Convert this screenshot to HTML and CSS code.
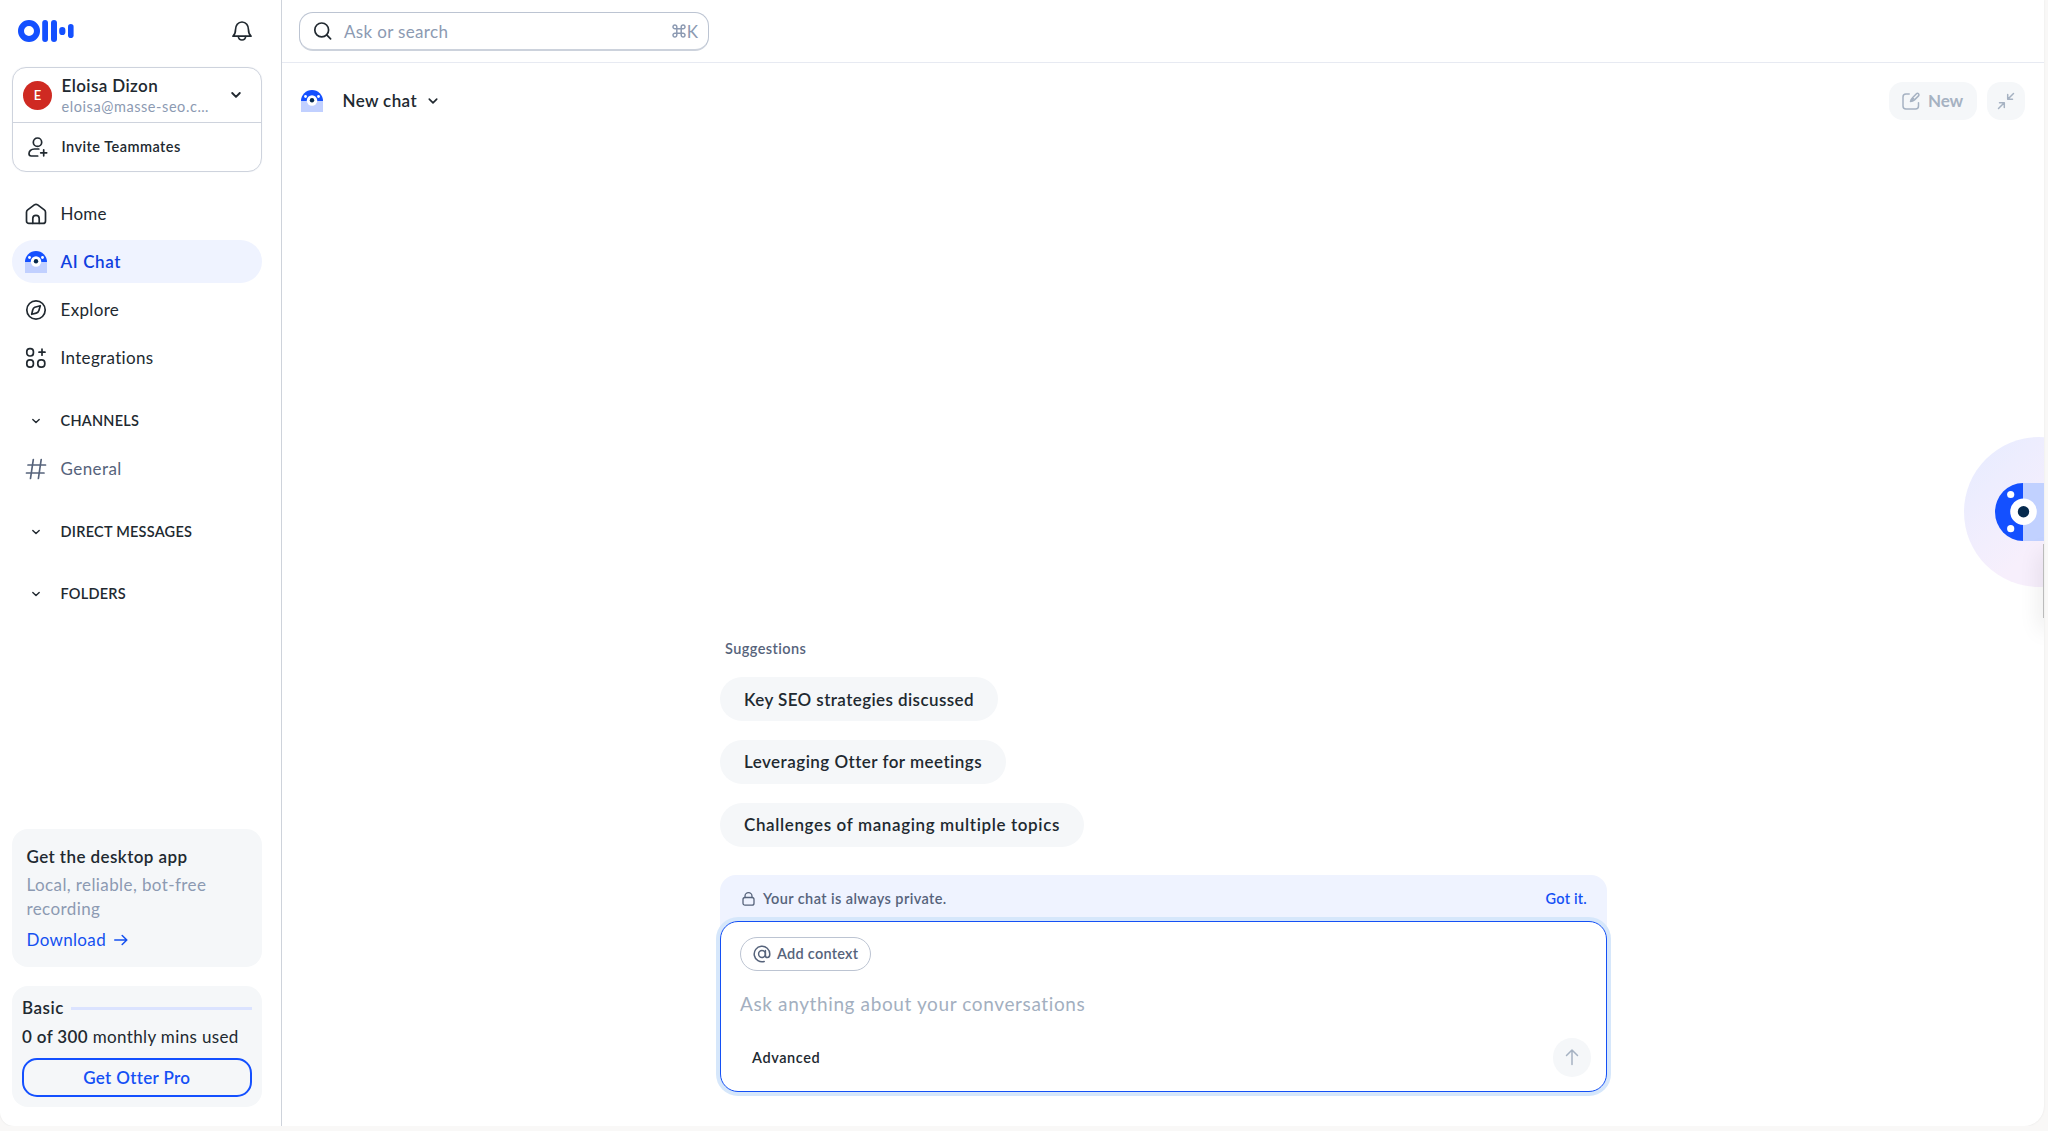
FILE: index.html
```html
<!DOCTYPE html>
<html lang="en">
<head>
<meta charset="utf-8">
<title>New chat</title>
<link rel="stylesheet" href="styles.css">
</head>
<body>
<svg width="0" height="0" class="defs">
  <symbol id="otter" viewBox="0 0 22 22">
    <path d="M0 11a11 11 0 0 1 22 0z" fill="#1450ff"/>
    <path d="M0 11h22v11H0z" fill="#c1d0ff"/>
    <circle cx="4.5" cy="6.5" r="1.4" fill="#fff"/><circle cx="17.5" cy="6.5" r="1.4" fill="#fff"/>
    <circle cx="11" cy="10.5" r="5.2" fill="#fff"/><circle cx="11" cy="10.2" r="2.2" fill="#062a4d"/>
  </symbol>
  <symbol id="chevron" viewBox="0 0 12 12">
    <path d="M2.8 4.4 6 7.600l3.200-3.200" fill="none" stroke="currentColor" stroke-width="1.4" stroke-linecap="round" stroke-linejoin="round"/>
  </symbol>
</svg>
<div class="app">
  <aside class="sidebar">
    <header class="brand">
      <svg width="58" height="24" viewBox="0 0 58 24" fill="#1450ff">
        <circle cx="12" cy="12" r="8" fill="none" stroke="#1450ff" stroke-width="6"/>
        <rect x="25.2" y="1" width="5.8" height="22" rx="2.9"/><rect x="34" y="1" width="6" height="22" rx="3"/>
        <rect x="42.2" y="8" width="6.2" height="8" rx="3.1"/><rect x="51" y="5" width="5.6" height="14" rx="2.8"/>
      </svg>
      <svg class="line" width="20" height="20" viewBox="0 0 20 20">
        <path d="M1 15.2c2-1.7 2.5-3.3 2.5-6.4C3.500 4.500 6 1 10 1s6.500 3.500 6.500 7.800c0 3.100.5 4.700 2.500 6.400z"/><path d="M6.300 15.500c.3 2.200 1.700 3.500 3.700 3.500s3.400-1.300 3.700-3.500"/>
      </svg>
    </header>

    <section class="account">
      <div class="account-user">
        <span class="avatar">E</span>
        <div class="who"><span class="who-name">Eloisa Dizon</span><span class="who-mail">eloisa@masse-seo.c…</span></div>
        <svg class="account-chevron" width="12" height="12" viewBox="0 0 12 12"><path d="M2.200 4 6 7.900 9.800 4"/></svg>
      </div>
      <div class="account-invite">
        <svg class="line" width="20" height="20" viewBox="0 0 20 20"><circle cx="9.500" cy="5.200" r="4.200"/><path d="M10.800 12H6.500C3 12 1 14.200 1 16.800c0 1.500.7 2.200 2.200 2.200h6.500M15.700 12.800v6M12.700 15.800h6"/></svg>
        <span>Invite Teammates</span>
      </div>
    </section>

    <nav class="nav">
      <a class="nav-item"><svg class="line" width="22" height="22" viewBox="0 0 22 22"><path d="M1.500 9.200c0-1 .4-1.700 1.200-2.300l6.600-5c1.200-.8 2.200-.8 3.400 0l6.600 5c.8.600 1.200 1.300 1.200 2.300v8.700c0 1.600-.9 2.500-2.500 2.500H4c-1.600 0-2.500-.9-2.500-2.500z"/><path d="M7.800 20.300v-4.800a3.200 3.200 0 0 1 6.400 0v4.800"/></svg><span class="t-home">Home</span></a>
      <a class="nav-item active"><svg width="22" height="22"><use href="#otter"/></svg><span class="t-chat">AI Chat</span></a>
      <a class="nav-item"><svg class="line" width="22" height="22" viewBox="0 0 22 22"><circle cx="11" cy="11" r="9.200"/><path d="M15.300 6.700 9.800 8.300C8.700 8.700 8 9.800 7.700 11l-1 4.300 4.500-1.200c1.500-.4 2.300-1.200 2.700-2.600z"/></svg><span>Explore</span></a>
      <a class="nav-item"><svg class="line" width="22" height="22" viewBox="0 0 22 22"><rect x="1.800" y="1.600" width="6.600" height="7.400" rx="3"/><rect x="1.800" y="12.800" width="6.600" height="7.400" rx="3.100"/><rect x="12.800" y="12.800" width="7" height="7.400" rx="3.200"/><path d="M17 2.200v6M14 5.200h6"/></svg><span>Integrations</span></a>
    </nav>

    <div class="group">
      <h2 class="group-title"><svg width="12" height="12"><use href="#chevron"/></svg>CHANNELS</h2>
      <a class="nav-item muted"><svg class="line" width="22" height="22" viewBox="0 0 22 22"><path d="M8.300 1.500 5.500 20.500M16.200 1.500 13.400 20.500M3 7h17.500M1.500 15H19"/></svg><span>General</span></a>
    </div>
    <div class="group"><h2 class="group-title"><svg width="12" height="12"><use href="#chevron"/></svg>DIRECT MESSAGES</h2></div>
    <div class="group"><h2 class="group-title"><svg width="12" height="12"><use href="#chevron"/></svg>FOLDERS</h2></div>

    <div class="spacer"></div>

    <section class="promo">
      <h3>Get the desktop app</h3>
      <p>Local, reliable, bot-free<br>recording</p>
      <a>Download <svg width="14" height="14" viewBox="0 0 14 14"><path d="M.7 7h12M8.200 2.500 12.800 7l-4.600 4.500"/></svg></a>
    </section>
    <section class="plan">
      <div class="plan-head"><b>Basic</b><i class="meter"></i></div>
      <div class="plan-use"><b>0 of 300</b> monthly mins used</div>
      <button class="upgrade">Get Otter Pro</button>
    </section>
  </aside>

  <main class="main">
    <header class="topbar">
      <div class="search">
        <svg class="line" width="20" height="20" viewBox="0 0 20 20"><circle cx="8.700" cy="8.900" r="6.900"/><path d="m13.700 13.900 3.900 3.900"/></svg>
        <span>Ask or search</span>
        <svg class="cmd" width="14" height="14" viewBox="0 0 14 14"><path d="M4.800 4.800h4.400v4.400H4.800zM4.800 4.800H3a1.900 1.900 0 1 1 1.800-1.900zM9.200 4.800H11a1.900 1.900 0 1 0-1.800-1.900zM4.800 9.200H3a1.900 1.900 0 1 0 1.800 1.900zM9.200 9.200H11a1.900 1.900 0 1 1-1.800 1.900z"/></svg>
        <kbd>K</kbd>
      </div>
    </header>

    <div class="chat-head">
      <svg width="22" height="22"><use href="#otter"/></svg>
      <h1>New chat</h1>
      <svg class="chat-chevron" width="14" height="14"><use href="#chevron"/></svg>
      <div class="actions">
        <button class="soft"><svg width="18" height="18" viewBox="0 0 18 18"><path d="M7.200 2H4C2 2 1 3 1 5v9c0 2 1 3 3 3h9.500c2 0 3-1 3-3v-3.300"/><path d="M8.500 9.500c.2-1.500.8-2.600 2-3.700L14.200 2c.8-.8 1.700-.8 2.300-.2s.6 1.500-.2 2.300L12.500 7.900c-1.200 1.100-2.400 1.600-4 1.600zM8.500 9.500l3-3"/></svg>New</button>
        <button class="soft square"><svg width="18" height="18" viewBox="0 0 18 18"><path d="M16.500 1.500 11 7M10.700 2.500v4.800h4.800M1.500 16.500 7 11M2.500 10.700h4.800v4.800"/></svg></button>
      </div>
    </div>

    <div class="column">
      <div class="label">Suggestions</div>
      <button class="chip">Key SEO strategies discussed</button>
      <button class="chip t-lev">Leveraging Otter for meetings</button>
      <button class="chip t-chal">Challenges of managing multiple topics</button>
      <div class="ask">
        <div class="notice">
          <svg width="13" height="14" viewBox="0 0 13 14"><rect x="1" y="5.500" width="11" height="7.700" rx="2"/><path d="M3 5.500V4.200a3.500 3.500 0 0 1 7 0v1.300"/></svg>
          <span>Your chat is always private.</span><a>Got it.</a>
        </div>
        <div class="composer">
          <button class="context"><svg width="18" height="18" viewBox="0 0 18 18"><circle cx="9" cy="9" r="3.400"/><path d="M12.400 5.600v4.900c0 1.300.8 2.100 2 2.100 1.500 0 2.400-1.500 2.400-3.600a7.800 7.800 0 1 0-5.600 7.500"/></svg>Add context</button>
          <div class="placeholder">Ask anything about your conversations</div>
          <div class="composer-foot">
            <span class="advanced">Advanced</span>
            <button class="send"><svg width="18" height="18" viewBox="0 0 18 18"><path d="M9 16.500V2M3.500 7.500 9 2l5.500 5.500"/></svg></button>
          </div>
        </div>
      </div>
    </div>
  </main>
  <div class="bubble"><svg width="49" height="58" viewBox="0 0 49 58"><path d="M28 0v58A28 29 0 0 1 28 0z" fill="#1450ff"/><path d="M28 0h21v58H28z" fill="#c1d1ff"/><circle cx="28.500" cy="28.700" r="13.300" fill="#fff"/><circle cx="28.500" cy="28.700" r="5.700" fill="#062a4d"/><circle cx="15.700" cy="11.500" r="3.600" fill="#fff"/><circle cx="15.700" cy="45.700" r="3.600" fill="#fff"/></svg></div>
  <div class="edge-shadow"></div>
</div>
</body>
</html>
```
FILE: styles.css
```css
* { box-sizing: border-box; }
body {
  margin: 0;
  background: #f9f8f7;
  font-family: Lato, "Liberation Sans", sans-serif;
  font-size: 17px;
  line-height: 24px;
  letter-spacing: .34px;
  color: #212930;
}
.defs { position: absolute; }
svg { flex: none; display: block; }
h1, h2, h3, p { margin: 0; font-weight: 500; }
b { font-weight: 600; }
button { font: inherit; letter-spacing: inherit; color: inherit; border: 0; margin: 0; padding: 0; background: none; white-space: nowrap; }
a, span, h1 { white-space: nowrap; }
.line { fill: none; stroke: currentColor; stroke-width: 1.7; stroke-linecap: round; stroke-linejoin: round; }

.app {
  position: relative;
  display: flex;
  width: 2044px;
  height: 1126px;
  background: #fff;
  border-radius: 0 0 20px 14px;
  box-shadow: 0 0 2px #e4e3e3;
  overflow: hidden;
}
.sidebar {
  width: 282px;
  flex: none;
  display: flex;
  flex-direction: column;
  padding: 0 19.500px 19.500px 12px;
  border-right: 1px solid #ced3db;
}
.brand { display: flex; align-items: center; justify-content: space-between; height: 62px; padding: 0 9.500px 0 5px; }

.account { margin-top: 5px; height: 105px; border: 1px solid #ced3dd; border-radius: 14px; box-shadow: 0 0 1px #dfe3ea; }
.account-user { display: flex; align-items: center; height: 55px; padding: 0 18.500px 0 10px; border-bottom: 1px solid #ced3dd; }
.avatar { width: 29px; height: 29px; border-radius: 50%; background: #cf2a22; color: #fff; font-weight: 600; font-size: 13px; line-height: 29px; text-align: center; letter-spacing: 0; }
.who { display: flex; flex-direction: column; margin-left: 9.500px; padding-top: 1.500px; flex: 1; }
.who-name { font-weight: 600; letter-spacing: .4px; line-height: 22px; }
.who-mail { font-size: 14.500px; line-height: 20px; letter-spacing: .57px; color: #8c9ab2; }
.account-chevron { fill: none; stroke: #212930; stroke-width: 1.900; stroke-linecap: round; stroke-linejoin: round; }
.account-invite { display: flex; align-items: center; gap: 13.500px; height: 48px; padding-left: 15px; font-size: 14.500px; font-weight: 600; letter-spacing: .47px; }

.nav { display: flex; flex-direction: column; gap: 5.300px; margin-top: 20px; }
.nav-item { display: flex; align-items: center; gap: 13.500px; height: 43px; padding-left: 13px; border-radius: 22px; }
.nav-item.active { background: #eff3ff; color: #0f3fe0; font-weight: 600; }
.t-chat { letter-spacing: .62px; }
.nav-item.muted { color: #56637b; letter-spacing: .42px; }
.t-home { letter-spacing: .25px; }
.group { margin-top: 22.500px; }
.nav + .group { margin-top: 21px; }
.group-title { display: flex; align-items: center; gap: 18.500px; height: 40px; padding-left: 18px; font-size: 14.500px; font-weight: 600; letter-spacing: .24px; }
.group .nav-item { margin-top: 7px; }
.group:has(.nav-item) + .group { margin-top: 21px; }
.spacer { flex: 1; }

.promo { height: 138px; padding: 13.500px 14.500px; border-radius: 16px; background: #f5f7f9; }
.promo h3 { font-size: 17px; letter-spacing: .42px; line-height: 27px; font-weight: 600; }
.promo p { margin-top: 3px; color: #8c9ab2; line-height: 24.300px; letter-spacing: .4px; font-weight: 400; }
.promo a { display: flex; align-items: center; gap: 8px; margin-top: 7px; color: #1450f0; }
.promo svg, .soft svg, .notice svg, .context svg, .send svg, .cmd { fill: none; stroke: currentColor; stroke-width: 1.500; stroke-linecap: round; stroke-linejoin: round; }
.plan { height: 120.500px; margin-top: 19px; padding: 10px 10px 0; border-radius: 16px; background: #f5f7f9; }
.plan-head { display: flex; align-items: center; gap: 7px; letter-spacing: .5px; }
.meter { flex: 1; height: 3px; background: #dbe3ff; }
.plan-use { margin-top: 5px; letter-spacing: .36px; white-space: nowrap; }
.upgrade { display: block; width: 100%; height: 39px; margin-top: 9px; border: 2px solid #1450ff; border-radius: 15px; color: #1450f5; font-weight: 600; text-align: center; }

.main { flex: 1; display: flex; flex-direction: column; min-width: 0; }
.topbar { flex: none; height: 63px; padding: 12px 17px; border-bottom: 1px solid #e7eaf2; }
.search { display: flex; align-items: center; width: 410px; height: 39px; padding: 0 10px 0 13px; border: 1px solid #bcc4d2; border-bottom-width: 2px; border-bottom-color: #ccd2dc; border-radius: 14px; color: #8c9ab2; }
.search > span { flex: 1; margin-left: 11px; padding-top: 1px; }
.search .line { color: #212930; }
.search kbd { font: inherit; margin-left: 1px; letter-spacing: 0; padding-top: 1px; }

.chat-head { display: flex; align-items: center; height: 76px; padding: 0 19px; }
.chat-head h1 { font-size: 17px; margin-left: 19.500px; font-weight: 600; letter-spacing: .38px; }
.chat-chevron { margin-left: 9.500px; }
.actions { display: flex; gap: 10px; margin-left: auto; }
.soft { display: flex; align-items: center; gap: 8px; height: 38.500px; width: 88px; padding-left: 13px; border-radius: 14px; background: #f5f7f9; color: #a6b2c2; font-weight: 700; letter-spacing: -.1px; }
.square { width: 38px; padding-left: 10px; }

.column { width: 887px; margin: auto 0 34px 438px; display: flex; flex-direction: column; align-items: flex-start; }
.label { padding-left: 5px; font-size: 14.500px; font-weight: 600; letter-spacing: .43px; color: #56637b; }
.chip { height: 43.500px; margin-top: 19.300px; padding: 1px 24px 0; border-radius: 22px; background: #f5f7f9; font-weight: 600; letter-spacing: .41px; }
.label + .chip { margin-top: 16.500px; }
.t-lev { letter-spacing: .47px; }
.t-chal { letter-spacing: .63px; }
.ask { width: 100%; margin-top: 28.500px; }
.notice { display: flex; align-items: center; height: 64px; margin-bottom: -18px; padding: 0 20px 16px 22px; border-radius: 16px 16px 0 0; background: #eff3ff; font-size: 14.500px; font-weight: 600; letter-spacing: .41px; color: #56637b; }
.notice span { margin-left: 8px; flex: 1; }
.notice svg { stroke-width: 1.300; }
.notice a { color: #1450f5; letter-spacing: .22px; }
.composer { height: 171px; padding: 15px 15px 0 19px; border: 1px solid #1450f5; border-radius: 18px; background: #fff; box-shadow: 0 0 0 4px #d6e7fb; }
.context { display: flex; align-items: center; gap: 6px; height: 33.500px; width: 131px; padding-left: 12px; border: 1px solid #bcc4d2; border-radius: 17px; font-size: 14.500px; font-weight: 600; letter-spacing: .26px; color: #56637b; }
.placeholder { margin-top: 21.500px; font-size: 19px; letter-spacing: .62px; color: #a3afc0; }
.composer-foot { display: flex; align-items: center; justify-content: space-between; margin-top: 22px; padding-left: 12px; }
.advanced { font-size: 14.500px; font-weight: 600; letter-spacing: .6px; padding-top: 1px; }
.send { width: 38.500px; height: 38.500px; display: grid; place-items: center; border-radius: 50%; background: #f5f7f9; color: #a6b2c2; }

.edge-shadow { position: absolute; left: 2043px; top: 544px; width: 10px; height: 74px; background: #bbb; box-shadow: 0 10px 22px 2px rgba(0, 0, 0, .1); }
.bubble { position: absolute; left: 1964px; top: 437px; width: 150px; height: 150px; border-radius: 75px; background: linear-gradient(135deg, #e8ecff 8%, #f7effc 60%); padding: 46px 0 0 31px; }
```
